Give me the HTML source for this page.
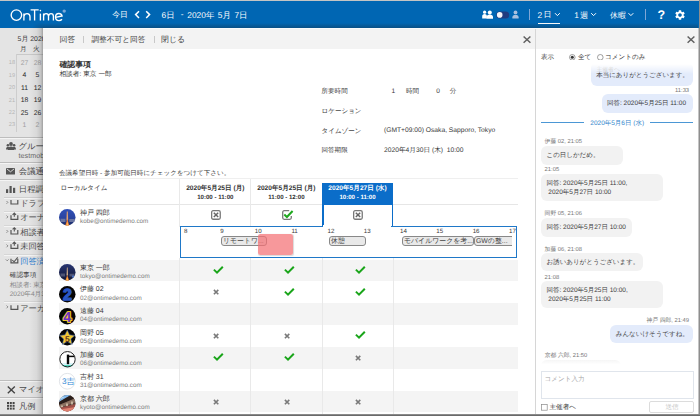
<!DOCTYPE html>
<html><head><meta charset="utf-8"><style>
*{box-sizing:border-box;margin:0;padding:0}
html,body{width:700px;height:416px;overflow:hidden;background:#e8e8e8;font-family:"Liberation Sans",sans-serif;color:#333;text-rendering:geometricPrecision}
.a{position:absolute;white-space:nowrap}
svg.a{overflow:visible}
.pl{height:9.6px;border:1px solid #888;border-radius:3px;background:#e9e9e9;font-size:6.9px;line-height:7.6px;color:#404040;padding-left:1.2px;overflow:hidden}
</style></head><body>
<div class="a" style="left:0px;top:0px;width:700px;height:1px;background:#c4c4c4;"></div>
<div class="a" style="left:0px;top:1px;width:700px;height:27px;background:#0066b3;"></div>
<svg class="a" style="left:8px;top:5px" width="62" height="18"><g fill="none" stroke="#fff" stroke-width="1.35">
  <circle cx="8.4" cy="10.1" r="5.25"/>
  <path d="M15.9 15.5V8.6M15.9 11.4c0.4-1.9 1.7-2.8 3.2-2.8c1.9 0 2.9 1.2 2.9 3.2v3.7"/>
  <path d="M22.6 4.9h8.1M26.6 4.9v10.6"/>
  <path d="M32.4 8.6v6.9"/>
  <path d="M35.6 15.5V8.6M35.6 11c0.3-1.6 1.3-2.4 2.5-2.4c1.5 0 2.4 1 2.4 2.7v4.2M40.5 11.1c0.3-1.6 1.3-2.5 2.5-2.5c1.5 0 2.4 1 2.4 2.7v4.2"/>
  <path d="M47.6 12.4l6.5-1.5c-0.5-1.5-1.7-2.4-3.2-2.4c-2 0-3.4 1.6-3.4 3.6c0 2 1.5 3.5 3.5 3.5c1.3 0 2.3-0.5 3-1.3"/>
 </g>
 <circle cx="32.4" cy="5.6" r="0.8" fill="#fff"/>
 <circle cx="56.2" cy="6.1" r="1.7" fill="#7aa8d8"/></svg>
<div class="a " style="left:112.30px;top:5px;font-size:7.8px;line-height:20px;color:#fff;font-weight:normal;">今日</div>
<svg class="a" style="left:134px;top:10px" width="18" height="10"><path d="M5 1.2L1.6 4.6L5 8M12.2 1.2L15.6 4.6L12.2 8" fill="none" stroke="#fff" stroke-width="1.5"/></svg>
<div class="a " style="left:161.60px;top:5px;font-size:8.4px;line-height:20px;color:#fff;font-weight:normal;">6日</div>
<div class="a " style="left:180.80px;top:4px;font-size:8.4px;line-height:20px;color:#fff;font-weight:normal;">-</div>
<div class="a " style="left:187.30px;top:5px;font-size:8.4px;line-height:20px;color:#fff;font-weight:normal;">2020年</div>
<div class="a " style="left:217.80px;top:5px;font-size:8.4px;line-height:20px;color:#fff;font-weight:normal;">5月</div>
<div class="a " style="left:234.40px;top:5px;font-size:8.4px;line-height:20px;color:#fff;font-weight:normal;">7日</div>
<svg class="a" style="left:481px;top:9px" width="40" height="12"><g fill="#fff"><circle cx="3.6" cy="3.2" r="1.6"/><path d="M1.2 9.6V7c0-1 .8-2 2.4-2S5.9 6 5.9 7v2.6z"/><circle cx="8.8" cy="3.4" r="2"/><path d="M5.6 9.8V8c0-1.5 1.3-2.5 3.2-2.5S12 6.5 12 8v1.8z"/></g>
 <rect x="15.2" y="2.4" width="13" height="7" rx="3.5" fill="#203c80"/>
 <circle cx="18.7" cy="5.9" r="2.8" fill="#f4f4f8"/>
 <g fill="#a9c0de"><circle cx="34.5" cy="3.4" r="1.9"/><path d="M31.4 9.6V8.2c0-1.5 1.2-2.5 3.1-2.5s3.1 1 3.1 2.5v1.4z"/></g></svg>
<div class="a" style="left:529px;top:9px;width:1px;height:11px;background:#7fa6d6;"></div>
<div class="a " style="left:537.60px;top:5px;font-size:8.4px;line-height:20px;color:#fff;font-weight:normal;">2</div>
<div class="a " style="left:543.60px;top:5px;font-size:8.0px;line-height:20px;color:#fff;font-weight:normal;">日</div>
<div class="a" style="left:538px;top:22.5px;width:22px;height:1.6px;background:#fff;"></div>
<div class="a " style="left:574.30px;top:5px;font-size:8.4px;line-height:20px;color:#fff;font-weight:normal;">1</div>
<div class="a " style="left:580.00px;top:6px;font-size:8.2px;line-height:20px;color:#fff;font-weight:normal;">週</div>
<div class="a " style="left:610.00px;top:6px;font-size:7.9px;line-height:20px;color:#fff;font-weight:normal;">休暇</div>
<svg class="a" style="left:554px;top:12px" width="80" height="6"><path d="M1 1.2l2.4 2.4l2.4-2.4M37.2 1.2l2.4 2.4l2.4-2.4M74.5 1.2l2.4 2.4l2.4-2.4" fill="none" stroke="#fff" stroke-width="1"/></svg>
<div class="a" style="left:644.5px;top:9px;width:1px;height:11px;background:#7fa6d6;"></div>
<div class="a " style="left:657.60px;top:5px;font-size:12.5px;line-height:20px;color:#fff;font-weight:bold;">?</div>
<svg class="a" style="left:674px;top:8.5px" width="12" height="12" viewBox="0 0 24 24"><path fill="#fff" d="M19.14 12.94c.04-.3.06-.61.06-.94 0-.32-.02-.64-.07-.94l2.03-1.58a.49.49 0 0 0 .12-.61l-1.92-3.32a.49.49 0 0 0-.59-.22l-2.39.96c-.5-.38-1.03-.7-1.62-.94l-.36-2.54a.48.48 0 0 0-.48-.41h-3.84c-.24 0-.43.17-.47.41l-.36 2.54c-.59.24-1.130.57-1.62.94l-2.39-.96a.48.48 0 0 0-.59.22L2.74 8.87c-.12.21-.08.47.12.61l2.03 1.58c-.05.3-.09.63-.09.94s.02.64.07.94l-2.03 1.58a.49.49 0 0 0-.12.61l1.92 3.32c.12.22.37.29.59.22l2.39-.96c.5.38 1.03.7 1.62.94l.36 2.540c.05.24.24.41.48.41h3.84c.24 0 .44-.17.47-.41l.36-2.54c.59-.24 1.13-.56 1.62-.94l2.39.96c.22.08.47 0 .59-.22l1.92-3.32c.12-.22.07-.47-.12-.61l-2.01-1.58zM12 15.6c-1.98 0-3.6-1.62-3.6-3.6s1.62-3.6 3.6-3.6 3.6 1.620 3.6 3.6-1.62 3.6-3.6 3.6z"/></svg>
<div class="a" style="left:0px;top:28px;width:43px;height:386px;background:#e4e4e4;"></div>
<div class="a " style="left:17.60px;top:30px;font-size:6.9px;line-height:20px;color:#383838;font-weight:normal;">5月 2020</div>
<div class="a " style="left:20.00px;top:40px;font-size:6.6px;line-height:20px;color:#383838;font-weight:normal;">月</div>
<div class="a " style="left:33.00px;top:40px;font-size:6.6px;line-height:20px;color:#383838;font-weight:normal;">火</div>
<div class="a" style="left:17px;top:54px;width:26px;height:1px;background:#c9c9c9;"></div>
<div class="a" style="left:16px;top:54px;width:1px;height:78px;background:#cdcdcd;"></div>
<div class="a " style="left:8.80px;top:53px;font-size:5.6px;line-height:20px;color:#b5b5b5;font-weight:normal;">18</div>
<div class="a " style="left:8.80px;top:66px;font-size:5.6px;line-height:20px;color:#b5b5b5;font-weight:normal;">19</div>
<div class="a " style="left:8.80px;top:78px;font-size:5.6px;line-height:20px;color:#b5b5b5;font-weight:normal;">20</div>
<div class="a " style="left:8.80px;top:91px;font-size:5.6px;line-height:20px;color:#b5b5b5;font-weight:normal;">21</div>
<div class="a " style="left:8.80px;top:103px;font-size:5.6px;line-height:20px;color:#b5b5b5;font-weight:normal;">22</div>
<div class="a " style="left:8.80px;top:115px;font-size:5.6px;line-height:20px;color:#b5b5b5;font-weight:normal;">23</div>
<div class="a " style="left:18.00px;top:54px;font-size:6.8px;line-height:20px;color:#a0a0a0;font-weight:normal;width:13px;text-align:center">27</div>
<div class="a " style="left:31.00px;top:54px;font-size:6.8px;line-height:20px;color:#a0a0a0;font-weight:normal;width:13px;text-align:center">28</div>
<div class="a " style="left:18.00px;top:66px;font-size:6.8px;line-height:20px;color:#2a2a2a;font-weight:normal;width:13px;text-align:center">4</div>
<div class="a " style="left:31.00px;top:66px;font-size:6.8px;line-height:20px;color:#2a2a2a;font-weight:normal;width:13px;text-align:center">5</div>
<div class="a " style="left:18.00px;top:79px;font-size:6.8px;line-height:20px;color:#2a2a2a;font-weight:normal;width:13px;text-align:center">11</div>
<div class="a " style="left:31.00px;top:79px;font-size:6.8px;line-height:20px;color:#2a2a2a;font-weight:normal;width:13px;text-align:center">12</div>
<div class="a " style="left:18.00px;top:91px;font-size:6.8px;line-height:20px;color:#2a2a2a;font-weight:normal;width:13px;text-align:center">18</div>
<div class="a " style="left:31.00px;top:91px;font-size:6.8px;line-height:20px;color:#2a2a2a;font-weight:normal;width:13px;text-align:center">19</div>
<div class="a " style="left:18.00px;top:104px;font-size:6.8px;line-height:20px;color:#2a2a2a;font-weight:normal;width:13px;text-align:center">25</div>
<div class="a " style="left:31.00px;top:104px;font-size:6.8px;line-height:20px;color:#2a2a2a;font-weight:normal;width:13px;text-align:center">26</div>
<div class="a " style="left:18.00px;top:116px;font-size:6.8px;line-height:20px;color:#a0a0a0;font-weight:normal;width:13px;text-align:center">1</div>
<div class="a " style="left:31.00px;top:116px;font-size:6.8px;line-height:20px;color:#a0a0a0;font-weight:normal;width:13px;text-align:center">2</div>
<div class="a" style="left:0px;top:137px;width:43px;height:1px;background:#bdbdbd;"></div>
<div class="a" style="left:0px;top:138px;width:43px;height:1px;background:#f4f4f4;"></div>
<svg class="a" style="left:6px;top:142.2px" width="10" height="8"><g fill="#555"><circle cx="5" cy="2" r="1.9"/><path d="M1.8 8c0-2.2 1.3-3.6 3.2-3.6S8.2 5.8 8.2 8z"/><circle cx="1.9" cy="3.3" r="1.3"/><circle cx="8.1" cy="3.3" r="1.3"/><path d="M0 7.6c0-1.6.7-2.9 1.9-2.9s1.6 1 1.6 1L2.5 7.6zM10 7.6c0-1.6-.7-2.9-1.9-2.9s-1.6 1-1.6 1l1 1.9z"/></g></svg>
<div class="a " style="left:18.40px;top:136px;font-size:8.4px;line-height:20px;color:#4a4a4a;font-weight:normal;">グループ</div>
<div class="a " style="left:18.60px;top:146px;font-size:7.2px;line-height:20px;color:#6a6a6a;font-weight:normal;">testmobile</div>
<div class="a" style="left:0px;top:162px;width:43px;height:1px;background:#bdbdbd;"></div>
<div class="a" style="left:0px;top:163px;width:43px;height:1px;background:#f4f4f4;"></div>
<svg class="a" style="left:6px;top:167.5px" width="9" height="6.5"><rect x="0" y="0" width="9" height="6.5" rx="0.6" fill="#555"/><path d="M0.9 0.9l3.6 2.9l3.6-2.9" fill="none" stroke="#e9e9e9" stroke-width="0.9"/></svg>
<div class="a " style="left:18.80px;top:161px;font-size:8.4px;line-height:20px;color:#4a4a4a;font-weight:normal;">会議通知</div>
<div class="a" style="left:0px;top:179px;width:43px;height:1px;background:#bdbdbd;"></div>
<div class="a" style="left:0px;top:180px;width:43px;height:1px;background:#f4f4f4;"></div>
<svg class="a" style="left:6px;top:185.5px" width="9.5" height="7"><g fill="#555"><rect x="0" y="3.2" width="2.2" height="3.8"/><rect x="3.5" y="0" width="2.2" height="7"/><rect x="7" y="1.8" width="2.2" height="5.2"/></g></svg>
<div class="a " style="left:18.80px;top:179px;font-size:8.4px;line-height:20px;color:#4a4a4a;font-weight:normal;">日程調整</div>
<div class="a" style="left:4px;top:197px;width:39px;height:1px;background:#cfcfcf;"></div>
<div class="a" style="left:4px;top:198px;width:39px;height:1px;background:#f4f4f4;"></div>
<svg class="a" style="left:0px;top:198px" width="20" height="12"><path d="M6.5 3l1.4 1.4l-1.4 1.4" fill="none" stroke="#666" stroke-width="0.7"/><path d="M11 2v4h6.8v-4" fill="none" stroke="#555" stroke-width="1.2"/></svg>
<div class="a " style="left:20.20px;top:194px;font-size:8.2px;line-height:20px;color:#4a4a4a;font-weight:normal;">ドラフト</div>
<div class="a" style="left:4px;top:211px;width:39px;height:1px;background:#d6d6d6;"></div>
<div class="a" style="left:4px;top:212px;width:39px;height:1px;background:#f4f4f4;"></div>
<svg class="a" style="left:0px;top:212px" width="20" height="12"><path d="M6.5 3.5l1.4 1.4l-1.4 1.4" fill="none" stroke="#666" stroke-width="0.7"/><path d="M11 3.3v4h6.8v-4" fill="none" stroke="#555" stroke-width="1.2"/><path d="M14.3 4.8V1.2M12.6 2.8L14.3 1.0999999999999999l1.7 1.7" fill="none" stroke="#555" stroke-width="1.1"/></svg>
<div class="a " style="left:20.20px;top:208px;font-size:8.2px;line-height:20px;color:#4a4a4a;font-weight:normal;">オーナー</div>
<div class="a" style="left:4px;top:225px;width:39px;height:1px;background:#d6d6d6;"></div>
<div class="a" style="left:4px;top:226px;width:39px;height:1px;background:#f4f4f4;"></div>
<svg class="a" style="left:0px;top:226px" width="20" height="12"><path d="M6.5 4l1.4 1.4l-1.4 1.4" fill="none" stroke="#666" stroke-width="0.7"/><path d="M11 4v4h6.8v-4" fill="none" stroke="#555" stroke-width="1.2"/><path d="M14.3 5.4V1.8M12.6 3.4000000000000004L14.3 1.7l1.7 1.7" fill="none" stroke="#555" stroke-width="1.1"/></svg>
<div class="a " style="left:20.20px;top:223px;font-size:8.2px;line-height:20px;color:#4a4a4a;font-weight:normal;">相談者</div>
<div class="a" style="left:4px;top:240px;width:39px;height:1px;background:#d6d6d6;"></div>
<div class="a" style="left:4px;top:241px;width:39px;height:1px;background:#f4f4f4;"></div>
<svg class="a" style="left:0px;top:241px" width="20" height="12"><path d="M6.5 3.5l1.4 1.4l-1.4 1.4" fill="none" stroke="#666" stroke-width="0.7"/><path d="M11 3.3v4h6.8v-4" fill="none" stroke="#555" stroke-width="1.2"/><path d="M14.3 4.8V1.2M12.6 2.8L14.3 1.0999999999999999l1.7 1.7" fill="none" stroke="#555" stroke-width="1.1"/></svg>
<div class="a " style="left:20.20px;top:237px;font-size:8.2px;line-height:20px;color:#4a4a4a;font-weight:normal;">未回答</div>
<div class="a" style="left:4px;top:254px;width:39px;height:1px;background:#d6d6d6;"></div>
<div class="a" style="left:4px;top:255px;width:39px;height:1px;background:#f4f4f4;"></div>
<svg class="a" style="left:0px;top:255px" width="20" height="12"><path d="M5.8 4.4l1.4 1.4l1.4-1.4" fill="none" stroke="#666" stroke-width="0.7"/><path d="M11 3.8v4h6.8v-4" fill="none" stroke="#555" stroke-width="1.2"/><path d="M12.3 5.2l1.8 1.6l3.6-4.4" fill="none" stroke="#555" stroke-width="1.1"/></svg>
<div class="a " style="left:20.20px;top:252px;font-size:8.2px;line-height:20px;color:#2f7fd0;font-weight:normal;">回答済</div>
<div class="a " style="left:9.70px;top:266px;font-size:6.7px;line-height:20px;color:#3a3a3a;font-weight:normal;">確認事項</div>
<div class="a " style="left:9.70px;top:276px;font-size:6.6px;line-height:20px;color:#888;font-weight:normal;">相談者: 東京 一郎</div>
<div class="a " style="left:9.70px;top:285px;font-size:6.6px;line-height:20px;color:#888;font-weight:normal;">2020年4月30日</div>
<div class="a" style="left:4px;top:301px;width:39px;height:1px;background:#d6d6d6;"></div>
<div class="a" style="left:4px;top:302px;width:39px;height:1px;background:#f4f4f4;"></div>
<svg class="a" style="left:0px;top:302px" width="20" height="12"><path d="M6.5 3.5l1.4 1.4l-1.4 1.4" fill="none" stroke="#666" stroke-width="0.7"/><path d="M11 3.3v4h6.8v-4" fill="none" stroke="#555" stroke-width="1.2"/></svg>
<div class="a " style="left:20.20px;top:299px;font-size:8.2px;line-height:20px;color:#4a4a4a;font-weight:normal;">アーカイブ</div>
<div class="a" style="left:0px;top:380px;width:43px;height:1px;background:#bdbdbd;"></div>
<div class="a" style="left:0px;top:381px;width:43px;height:1px;background:#f4f4f4;"></div>
<svg class="a" style="left:6.5px;top:385.5px" width="9" height="8"><path d="M0.8 0.6l7 6.6M7.8 0.6l-7 6.6" stroke="#444" stroke-width="1.4"/></svg>
<div class="a " style="left:19.00px;top:380px;font-size:8.2px;line-height:20px;color:#4a4a4a;font-weight:normal;">マイオプション</div>
<div class="a" style="left:0px;top:397px;width:43px;height:1px;background:#bdbdbd;"></div>
<div class="a" style="left:0px;top:398px;width:43px;height:1px;background:#f4f4f4;"></div>
<svg class="a" style="left:7px;top:402px" width="8" height="8"><g fill="#444"><rect x="0.0" y="0.0" width="2" height="2"/><rect x="2.8" y="0.0" width="2" height="2"/><rect x="5.6" y="0.0" width="2" height="2"/><rect x="0.0" y="2.8" width="2" height="2"/><rect x="2.8" y="2.8" width="2" height="2"/><rect x="5.6" y="2.8" width="2" height="2"/><rect x="0.0" y="5.6" width="2" height="2"/><rect x="2.8" y="5.6" width="2" height="2"/><rect x="5.6" y="5.6" width="2" height="2"/></g></svg>
<div class="a " style="left:19.00px;top:397px;font-size:8.2px;line-height:20px;color:#4a4a4a;font-weight:normal;">凡例</div>
<div class="a" style="left:29px;top:28px;width:14px;height:386px;background:linear-gradient(to right,rgba(0,0,0,0),rgba(0,0,0,0.05) 55%,rgba(0,0,0,0.14) 85%,rgba(0,0,0,0.3))"></div>
<div class="a" style="left:43px;top:22.5px;width:655px;height:5.5px;background:linear-gradient(rgba(40,40,40,0),rgba(40,40,40,0.14) 40%,rgba(30,30,30,0.3))"></div>
<div class="a" style="left:33px;top:22.5px;width:10px;height:5.5px;background:radial-gradient(at 100% 100%,rgba(40,40,40,0.28),rgba(40,40,40,0) 80%)"></div>
<div class="a" style="left:43px;top:28px;width:492px;height:386px;background:#fff;"></div>
<div class="a" style="left:43px;top:28px;width:492px;height:21px;background:#f3f3f3;"></div>
<div class="a " style="left:59.40px;top:30px;font-size:7.9px;line-height:20px;color:#444;font-weight:normal;">回答</div>
<div class="a" style="left:83px;top:35.5px;width:1px;height:7px;background:#c8c8c8;"></div>
<div class="a " style="left:91.40px;top:30px;font-size:7.7px;line-height:20px;color:#444;font-weight:normal;">調整不可と回答</div>
<div class="a" style="left:153.5px;top:35.5px;width:1px;height:7px;background:#c8c8c8;"></div>
<div class="a " style="left:161.00px;top:30px;font-size:7.9px;line-height:20px;color:#444;font-weight:normal;">閉じる</div>
<svg class="a" style="left:523px;top:35.8px" width="8" height="7.2"><path d="M0.6 0.5l6.8 6.2M7.4 0.5l-6.8 6.2" stroke="#606060" stroke-width="1.5"/></svg>
<div class="a" style="left:534.8px;top:28px;width:1.6px;height:386px;background:#d6d6d6;"></div>
<div class="a " style="left:59.40px;top:55px;font-size:7.9px;line-height:20px;color:#333;font-weight:bold;">確認事項</div>
<div class="a " style="left:59.40px;top:65px;font-size:6.7px;line-height:20px;color:#383838;font-weight:normal;">相談者: 東京 一郎</div>
<div class="a " style="left:321.50px;top:82px;font-size:6.55px;line-height:20px;color:#383838;font-weight:normal;">所要時間</div>
<div class="a " style="left:391.50px;top:82px;font-size:6.6px;line-height:20px;color:#383838;font-weight:normal;">1</div>
<div class="a " style="left:406.00px;top:82px;font-size:6.55px;line-height:20px;color:#383838;font-weight:normal;">時間</div>
<div class="a " style="left:436.30px;top:82px;font-size:6.6px;line-height:20px;color:#383838;font-weight:normal;">0</div>
<div class="a " style="left:449.70px;top:82px;font-size:6.55px;line-height:20px;color:#383838;font-weight:normal;">分</div>
<div class="a " style="left:321.50px;top:102px;font-size:6.55px;line-height:20px;color:#383838;font-weight:normal;">ロケーション</div>
<div class="a " style="left:321.50px;top:122px;font-size:6.55px;line-height:20px;color:#383838;font-weight:normal;">タイムゾーン</div>
<div class="a " style="left:384.00px;top:121px;font-size:6.7px;line-height:20px;color:#383838;font-weight:normal;">(GMT+09:00) Osaka, Sapporo, Tokyo</div>
<div class="a " style="left:321.50px;top:141px;font-size:6.55px;line-height:20px;color:#383838;font-weight:normal;">回答期限</div>
<div class="a " style="left:384.00px;top:141px;font-size:6.7px;line-height:20px;color:#383838;font-weight:normal;">2020年4月30日 (木) &nbsp;10:00</div>
<div class="a " style="left:59.00px;top:164px;font-size:6.55px;line-height:20px;color:#383838;font-weight:normal;">会議希望日時 - 参加可能日時にチェックをつけて下さい。</div>
<div class="a" style="left:59px;top:177.5px;width:459px;height:1px;background:#efefef;"></div>
<div class="a " style="left:60.50px;top:179px;font-size:6.6px;line-height:20px;color:#383838;font-weight:normal;">ローカルタイム</div>
<div class="a" style="left:59px;top:204.3px;width:459px;height:1px;background:#e6e6e6;"></div>
<div class="a" style="left:179.3px;top:178.5px;width:1px;height:48px;background:#e9e9e9;"></div>
<div class="a" style="left:250.4px;top:178.5px;width:1px;height:48px;background:#e9e9e9;"></div>
<div class="a" style="left:322px;top:183px;width:71px;height:21.6px;background:#0b6dc9;"></div>
<div class="a" style="left:322px;top:204.6px;width:1.5px;height:22px;background:#0b6dc9;"></div>
<div class="a" style="left:391.5px;top:204.6px;width:1.5px;height:22px;background:#0b6dc9;"></div>
<div class="a " style="left:179.80px;top:179px;font-size:6.6px;line-height:20px;color:#333;font-weight:bold;width:71px;text-align:center">2020年5月25日 (月)</div>
<div class="a " style="left:179.80px;top:188px;font-size:6.1px;line-height:20px;color:#333;font-weight:bold;width:71px;text-align:center">10:00 - 11:00</div>
<div class="a " style="left:250.90px;top:179px;font-size:6.6px;line-height:20px;color:#333;font-weight:bold;width:71px;text-align:center">2020年5月25日 (月)</div>
<div class="a " style="left:250.90px;top:188px;font-size:6.1px;line-height:20px;color:#333;font-weight:bold;width:71px;text-align:center">11:00 - 12:00</div>
<div class="a " style="left:322.00px;top:179px;font-size:6.6px;line-height:20px;color:#fff;font-weight:bold;width:71px;text-align:center">2020年5月27日 (水)</div>
<div class="a " style="left:322.00px;top:188px;font-size:6.1px;line-height:20px;color:#fff;font-weight:bold;width:71px;text-align:center">10:00 - 11:00</div>
<svg class="a" style="left:59.4px;top:208.9px" width="16.5" height="16.5"><defs><linearGradient id="G1" x1="0" y1="0" x2="0" y2="1"><stop offset="0" stop-color="#3050b8"/><stop offset="0.55" stop-color="#2a44a0"/><stop offset="1" stop-color="#1a2a60"/></linearGradient></defs><circle cx="8.25" cy="8.25" r="8.25" fill="url(#G1)"/><path d="M1.5 9.8h5v3.2h-5zM10.3 10h5.5v3h-5.5z" fill="#8088a8" opacity="0.75"/><path d="M7.8 2.5h1l.4 9h-1.8z" fill="#e0a070"/><path d="M8.3 10l2 6.5h-4z" fill="#f07a30"/><path d="M8.3 12.5l1 4h-2z" fill="#ffc060"/></svg>
<div class="a " style="left:79.90px;top:204px;font-size:7.0px;line-height:20px;color:#383838;font-weight:normal;">神戸 四郎</div>
<div class="a " style="left:80.00px;top:212px;font-size:6.3px;line-height:20px;color:#7c7c7c;font-weight:normal;">kobe@ontimedemo.com</div>
<svg class="a" style="left:211px;top:210.3px" width="10" height="10"><rect x="0.65" y="0.65" width="8.6" height="8.6" rx="1.5" fill="#fff" stroke="#787878" stroke-width="1.3"/><path d="M2.8 2.8l4.4 4.2M7.2 2.8l-4.4 4.2" stroke="#666" stroke-width="1.5"/></svg>
<svg class="a" style="left:282px;top:210.3px" width="12" height="10"><path d="M7.2 0.7H2.2a1.5 1.5 0 0 0-1.5 1.5v5.6a1.5 1.5 0 0 0 1.5 1.5h5.6a1.5 1.5 0 0 0 1.5-1.5V6" fill="none" stroke="#787878" stroke-width="1.3"/><path d="M2.3 4.6l2.6 2.4l5.7-6" fill="none" stroke="#1fa81f" stroke-width="2"/></svg>
<svg class="a" style="left:353.2px;top:210.3px" width="10" height="10"><rect x="0.65" y="0.65" width="8.6" height="8.6" rx="1.5" fill="#fff" stroke="#787878" stroke-width="1.3"/><path d="M2.8 2.8l4.4 4.2M7.2 2.8l-4.4 4.2" stroke="#666" stroke-width="1.5"/></svg>
<div class="a" style="left:179.8px;top:226px;width:337.6px;height:31.6px;border:1.4px solid #1f78c8"></div>
<div class="a" style="left:323.4px;top:224.5px;width:68.1px;height:3px;background:#fff;"></div>
<div class="a " style="left:175.70px;top:222px;font-size:6.2px;line-height:20px;color:#383838;font-weight:normal;width:20px;text-align:center">8</div>
<div class="a " style="left:212.00px;top:222px;font-size:6.2px;line-height:20px;color:#383838;font-weight:normal;width:20px;text-align:center">9</div>
<div class="a " style="left:248.30px;top:222px;font-size:6.2px;line-height:20px;color:#383838;font-weight:normal;width:20px;text-align:center">10</div>
<div class="a " style="left:284.60px;top:222px;font-size:6.2px;line-height:20px;color:#383838;font-weight:normal;width:20px;text-align:center">11</div>
<div class="a " style="left:320.90px;top:222px;font-size:6.2px;line-height:20px;color:#383838;font-weight:normal;width:20px;text-align:center">12</div>
<div class="a " style="left:357.20px;top:222px;font-size:6.2px;line-height:20px;color:#383838;font-weight:normal;width:20px;text-align:center">13</div>
<div class="a " style="left:393.50px;top:222px;font-size:6.2px;line-height:20px;color:#383838;font-weight:normal;width:20px;text-align:center">14</div>
<div class="a " style="left:429.80px;top:222px;font-size:6.2px;line-height:20px;color:#383838;font-weight:normal;width:20px;text-align:center">15</div>
<div class="a " style="left:466.10px;top:222px;font-size:6.2px;line-height:20px;color:#383838;font-weight:normal;width:20px;text-align:center">16</div>
<div class="a " style="left:502.40px;top:222px;font-size:6.2px;line-height:20px;color:#383838;font-weight:normal;width:20px;text-align:center">17</div>
<div class="a pl" style="left:221.3px;top:236px;width:45.3px"></div>
<div class="a " style="left:222.90px;top:232px;font-size:6.9px;line-height:20px;color:#404040;font-weight:normal;">リモートワ...</div>
<div class="a" style="left:258.1px;top:234.1px;width:35.2px;height:21px;background:rgba(244,112,116,0.72);border-radius:2.5px;box-shadow:0.5px 0.5px 1px rgba(0,0,0,0.15)"></div>
<div class="a pl" style="left:329.4px;top:236px;width:37.1px"></div>
<div class="a " style="left:331.00px;top:232px;font-size:6.9px;line-height:20px;color:#404040;font-weight:normal;">休憩</div>
<div class="a pl" style="left:402.4px;top:236px;width:71.3px"></div>
<div class="a " style="left:404.00px;top:232px;font-size:6.9px;line-height:20px;color:#404040;font-weight:normal;">モバイルワークを考...</div>
<div class="a" style="left:474.4px;top:236px;width:37.8px;height:9.6px;overflow:hidden"><div class="a pl" style="left:0;top:0;width:42.8px"></div></div>
<div class="a " style="left:476.00px;top:232px;font-size:6.9px;line-height:20px;color:#404040;font-weight:normal;">GWの整...</div>
<div class="a" style="left:59px;top:259.5px;width:459px;height:21.85px;background:#f4f4f4;"></div>
<div class="a" style="left:59px;top:303.2px;width:459px;height:21.85px;background:#f4f4f4;"></div>
<div class="a" style="left:59px;top:346.9px;width:459px;height:21.85px;background:#f4f4f4;"></div>
<div class="a" style="left:59px;top:390.6px;width:459px;height:21.85px;background:#f4f4f4;"></div>
<div class="a" style="left:179.3px;top:258px;width:1px;height:156px;background:#e9e9e9;"></div>
<div class="a" style="left:250.4px;top:258px;width:1px;height:156px;background:#e9e9e9;"></div>
<div class="a" style="left:321.5px;top:258px;width:1px;height:156px;background:#e9e9e9;"></div>
<div class="a" style="left:392.5px;top:258px;width:1px;height:156px;background:#e9e9e9;"></div>
<svg class="a" style="left:59.4px;top:263.9px" width="16.5" height="16.5"><defs><linearGradient id="G2" x1="0" y1="0" x2="0" y2="1"><stop offset="0" stop-color="#283470"/><stop offset="0.5" stop-color="#1c2552"/><stop offset="1" stop-color="#141a38"/></linearGradient></defs><circle cx="8.25" cy="8.25" r="8.25" fill="url(#G2)"/><path d="M1.5 9.5h4.5v3h-4.5zM10.5 9.8h5v2.8h-5z" fill="#5a6080" opacity="0.8"/><path d="M13 11.5h2v2h-2z" fill="#4a70c0"/><path d="M7.9 3.5h0.8l.4 8h-1.6z" fill="#c8a888"/><path d="M8.25 11l1.9 5.5h-3.8z" fill="#e87a30"/><path d="M8.25 13l1 3.5h-2z" fill="#ffc050"/></svg>
<div class="a " style="left:79.90px;top:259px;font-size:7.0px;line-height:20px;color:#383838;font-weight:normal;">東京 一郎</div>
<div class="a " style="left:80.00px;top:267px;font-size:6.3px;line-height:20px;color:#7c7c7c;font-weight:normal;">tokyo@ontimedemo.com</div>
<svg class="a" style="left:212.5px;top:265.9px" width="11" height="8"><path d="M0.9 3.6l3.1 3l5.8-5.9" fill="none" stroke="#1aa51a" stroke-width="2"/></svg>
<svg class="a" style="left:283.5px;top:265.9px" width="11" height="8"><path d="M0.9 3.6l3.1 3l5.8-5.9" fill="none" stroke="#1aa51a" stroke-width="2"/></svg>
<svg class="a" style="left:354.5px;top:265.9px" width="11" height="8"><path d="M0.9 3.6l3.1 3l5.8-5.9" fill="none" stroke="#1aa51a" stroke-width="2"/></svg>
<svg class="a" style="left:59.4px;top:285.75px" width="16.5" height="16.5"><circle cx="8.25" cy="8.25" r="8.25" fill="#050505"/><text x="8.5" y="14.4" font-size="16" font-weight="bold" text-anchor="middle" fill="#2a56c4" stroke="#2a56c4" stroke-width="1.3" stroke-linejoin="round" font-family="Liberation Sans">2</text></svg>
<div class="a " style="left:79.90px;top:280px;font-size:7.0px;line-height:20px;color:#383838;font-weight:normal;">伊藤 02</div>
<div class="a " style="left:80.00px;top:289px;font-size:6.3px;line-height:20px;color:#7c7c7c;font-weight:normal;">02@ontimedemo.com</div>
<svg class="a" style="left:212.7px;top:289.25px" width="7" height="7"><path d="M0.9 0.9l4.4 4.4M5.3 0.9l-4.4 4.4" stroke="#7a7a7a" stroke-width="1.6"/></svg>
<svg class="a" style="left:283.5px;top:287.75px" width="11" height="8"><path d="M0.9 3.6l3.1 3l5.8-5.9" fill="none" stroke="#1aa51a" stroke-width="2"/></svg>
<svg class="a" style="left:354.5px;top:287.75px" width="11" height="8"><path d="M0.9 3.6l3.1 3l5.8-5.9" fill="none" stroke="#1aa51a" stroke-width="2"/></svg>
<svg class="a" style="left:59.4px;top:307.59999999999997px" width="16.5" height="16.5"><circle cx="8.25" cy="8.25" r="8.25" fill="#050505"/><text x="8.4" y="13.9" font-size="14.5" font-weight="bold" text-anchor="middle" fill="#6a30c8" stroke="#f0c428" stroke-width="2.2" stroke-linejoin="round" paint-order="stroke" font-family="Liberation Sans">4</text></svg>
<div class="a " style="left:79.90px;top:302px;font-size:7.0px;line-height:20px;color:#383838;font-weight:normal;">遠藤 04</div>
<div class="a " style="left:80.00px;top:310px;font-size:6.3px;line-height:20px;color:#7c7c7c;font-weight:normal;">04@ontimedemo.com</div>
<svg class="a" style="left:59.4px;top:329.45px" width="16.5" height="16.5"><circle cx="8.25" cy="8.25" r="8.25" fill="#050505"/><path d="M8.25 0.9l2.3 4.9l5.4 .6l-4 3.6l1.2 5.4l-4.9-2.8l-4.9 2.8l1.2-5.4l-4-3.6l5.4-.6z" fill="#f2c832" stroke="#2850a8" stroke-width="0.6"/><text x="8.4" y="12.6" font-size="8.5" font-weight="bold" text-anchor="middle" fill="#5a3020" font-family="Liberation Sans">5</text></svg>
<div class="a " style="left:79.90px;top:324px;font-size:7.0px;line-height:20px;color:#383838;font-weight:normal;">岡野 05</div>
<div class="a " style="left:80.00px;top:332px;font-size:6.3px;line-height:20px;color:#7c7c7c;font-weight:normal;">05@ontimedemo.com</div>
<svg class="a" style="left:212.7px;top:332.95px" width="7" height="7"><path d="M0.9 0.9l4.4 4.4M5.3 0.9l-4.4 4.4" stroke="#7a7a7a" stroke-width="1.6"/></svg>
<svg class="a" style="left:283.7px;top:332.95px" width="7" height="7"><path d="M0.9 0.9l4.4 4.4M5.3 0.9l-4.4 4.4" stroke="#7a7a7a" stroke-width="1.6"/></svg>
<svg class="a" style="left:354.5px;top:331.45px" width="11" height="8"><path d="M0.9 3.6l3.1 3l5.8-5.9" fill="none" stroke="#1aa51a" stroke-width="2"/></svg>
<svg class="a" style="left:59.4px;top:351.29999999999995px" width="16.5" height="16.5"><defs><clipPath id="C6"><circle cx="8.5" cy="8.25" r="8"/></clipPath></defs><circle cx="8.5" cy="8.25" r="8" fill="#fff"/><g clip-path="url(#C6)"><rect x="0" y="12" width="17" height="2.5" fill="#d8f4f8"/><rect x="0" y="14" width="17" height="3" fill="#50d8c0"/></g><circle cx="8.5" cy="8.25" r="7.7" fill="none" stroke="#222" stroke-width="1"/><path d="M9 3.6v9.6" stroke="#050505" stroke-width="2.4"/><path d="M9 5.4h6.4" stroke="#050505" stroke-width="1.5"/></svg>
<div class="a " style="left:79.90px;top:346px;font-size:7.0px;line-height:20px;color:#383838;font-weight:normal;">加藤 06</div>
<div class="a " style="left:80.00px;top:354px;font-size:6.3px;line-height:20px;color:#7c7c7c;font-weight:normal;">06@ontimedemo.com</div>
<svg class="a" style="left:212.5px;top:353.29999999999995px" width="11" height="8"><path d="M0.9 3.6l3.1 3l5.8-5.9" fill="none" stroke="#1aa51a" stroke-width="2"/></svg>
<svg class="a" style="left:283.5px;top:353.29999999999995px" width="11" height="8"><path d="M0.9 3.6l3.1 3l5.8-5.9" fill="none" stroke="#1aa51a" stroke-width="2"/></svg>
<svg class="a" style="left:354.7px;top:354.79999999999995px" width="7" height="7"><path d="M0.9 0.9l4.4 4.4M5.3 0.9l-4.4 4.4" stroke="#7a7a7a" stroke-width="1.6"/></svg>
<svg class="a" style="left:59.4px;top:373.15px" width="16.5" height="16.5"><circle cx="8.25" cy="8.25" r="7.9" fill="#fff" stroke="#d4d8de" stroke-width="0.7"/><text x="9.4" y="11.4" font-size="8.2" text-anchor="middle" fill="#2f86d4" font-family="Liberation Sans">3吉</text></svg>
<div class="a " style="left:79.90px;top:368px;font-size:7.0px;line-height:20px;color:#383838;font-weight:normal;">吉村 31</div>
<div class="a " style="left:80.00px;top:376px;font-size:6.3px;line-height:20px;color:#7c7c7c;font-weight:normal;">31@ontimedemo.com</div>
<svg class="a" style="left:59.4px;top:395.0px" width="16.5" height="16.5"><defs><clipPath id="C8"><circle cx="8.25" cy="8.25" r="8.25"/></clipPath></defs><g clip-path="url(#C8)"><rect width="17" height="17" fill="#5a4038"/><path d="M0 0h12L0 7z" fill="#80b8ec"/><path d="M0 2h6l-6 3z" fill="#b8dcf4"/><path d="M0 7L12 0h5v3L0 10z" fill="#2a1e1a"/><path d="M0 10l17-7v4L0 13z" fill="#8a7060"/><path d="M2 10.5h2v2H2zM7 8.5h2v2.5H7zM12 6.5h2v3h-2z" fill="#d8c8b0" opacity="0.8"/><path d="M0 13l17-4V17H0z" fill="#a05048"/><path d="M0 14.5l17-2.5V17H0z" fill="#e08070"/></g></svg>
<div class="a " style="left:79.90px;top:390px;font-size:7.0px;line-height:20px;color:#383838;font-weight:normal;">京都 六郎</div>
<div class="a " style="left:80.00px;top:398px;font-size:6.3px;line-height:20px;color:#7c7c7c;font-weight:normal;">kyoto@ontimedemo.com</div>
<svg class="a" style="left:212.7px;top:398.5px" width="7" height="7"><path d="M0.9 0.9l4.4 4.4M5.3 0.9l-4.4 4.4" stroke="#7a7a7a" stroke-width="1.6"/></svg>
<svg class="a" style="left:283.7px;top:398.5px" width="7" height="7"><path d="M0.9 0.9l4.4 4.4M5.3 0.9l-4.4 4.4" stroke="#7a7a7a" stroke-width="1.6"/></svg>
<svg class="a" style="left:354.7px;top:398.5px" width="7" height="7"><path d="M0.9 0.9l4.4 4.4M5.3 0.9l-4.4 4.4" stroke="#7a7a7a" stroke-width="1.6"/></svg>
<div class="a" style="left:536px;top:28px;width:162px;height:386px;background:#fff;"></div>
<div class="a" style="left:536px;top:28px;width:162px;height:21px;background:#f3f3f3;"></div>
<div class="a" style="left:43px;top:28px;width:655px;height:1px;background:#fafafa;"></div>
<svg class="a" style="left:687px;top:35.8px" width="8" height="7.2"><path d="M0.6 0.5l6.8 6.2M7.4 0.5l-6.8 6.2" stroke="#606060" stroke-width="1.5"/></svg>
<div class="a " style="left:541.00px;top:48px;font-size:6.6px;line-height:20px;color:#383838;font-weight:normal;">表示</div>
<svg class="a" style="left:569px;top:53.8px" width="7" height="7"><circle cx="3.3" cy="3.3" r="2.8" fill="#fff" stroke="#777" stroke-width="0.7"/><circle cx="3.3" cy="3.3" r="1.5" fill="#333"/></svg>
<div class="a " style="left:578.00px;top:48px;font-size:6.6px;line-height:20px;color:#383838;font-weight:normal;">全て</div>
<svg class="a" style="left:596.6px;top:53.8px" width="7" height="7"><circle cx="3.3" cy="3.3" r="2.8" fill="#fff" stroke="#777" stroke-width="0.7"/></svg>
<div class="a " style="left:605.00px;top:48px;font-size:6.6px;line-height:20px;color:#383838;font-weight:normal;">コメントのみ</div>
<div class="a" style="left:590.7px;top:62px;width:102.7px;height:23.5px;background:#e3ebfb;border-radius:6px"></div>
<div class="a " style="left:596.50px;top:60px;font-size:5.8px;line-height:20px;color:#b0b0b0;font-weight:normal;">主催者へ</div>
<div class="a " style="left:596.20px;top:66px;font-size:6.5px;line-height:20px;color:#3c3c3c;font-weight:normal;">本当にありがとうございます。</div>
<div class="a " style="left:675.00px;top:81px;font-size:5.8px;line-height:20px;color:#747474;font-weight:normal;">11:33</div>
<div class="a" style="left:601.6px;top:94.2px;width:91.9px;height:18.4px;background:#e3ebfb;border-radius:6px"></div>
<div class="a " style="left:607.00px;top:94px;font-size:6.5px;line-height:20px;color:#3c3c3c;font-weight:normal;">回答: 2020年5月25日 11:00</div>
<div class="a" style="left:541px;top:122px;width:43.3px;height:1px;background:#4b97d5;"></div>
<div class="a" style="left:650px;top:122px;width:43.3px;height:1px;background:#4b97d5;"></div>
<div class="a " style="left:590.30px;top:114px;font-size:6.5px;line-height:20px;color:#3286cc;font-weight:normal;">2020年5月6日 (水)</div>
<div class="a " style="left:544.60px;top:132px;font-size:5.8px;line-height:20px;color:#747474;font-weight:normal;">伊藤 02, 21:05</div>
<div class="a" style="left:541px;top:146px;width:81.8px;height:18.8px;background:#f2f2f2;border-radius:6px"></div>
<div class="a " style="left:546.50px;top:146px;font-size:6.5px;line-height:20px;color:#3c3c3c;font-weight:normal;">この日しかだめ。</div>
<div class="a " style="left:544.60px;top:160px;font-size:5.8px;line-height:20px;color:#747474;font-weight:normal;">21:05</div>
<div class="a" style="left:541px;top:173.7px;width:121.5px;height:27.7px;background:#f2f2f2;border-radius:6px"></div>
<div class="a " style="left:546.50px;top:174px;font-size:6.5px;line-height:20px;color:#3c3c3c;font-weight:normal;">回答: 2020年5月25日 11:00,</div>
<div class="a " style="left:546.50px;top:183px;font-size:6.5px;line-height:20px;color:#3c3c3c;font-weight:normal;">&nbsp;2020年5月27日 10:00</div>
<div class="a " style="left:544.60px;top:204px;font-size:5.8px;line-height:20px;color:#747474;font-weight:normal;">岡野 05, 21:06</div>
<div class="a" style="left:541px;top:218px;width:91.4px;height:18.6px;background:#f2f2f2;border-radius:6px"></div>
<div class="a " style="left:546.50px;top:218px;font-size:6.5px;line-height:20px;color:#3c3c3c;font-weight:normal;">回答: 2020年5月27日 10:00</div>
<div class="a " style="left:544.60px;top:240px;font-size:5.8px;line-height:20px;color:#747474;font-weight:normal;">加藤 06, 21:08</div>
<div class="a" style="left:541px;top:252.9px;width:102.3px;height:18.5px;background:#f2f2f2;border-radius:6px"></div>
<div class="a " style="left:546.50px;top:253px;font-size:6.5px;line-height:20px;color:#3c3c3c;font-weight:normal;">お誘いありがとうございます。</div>
<div class="a " style="left:544.60px;top:268px;font-size:5.8px;line-height:20px;color:#747474;font-weight:normal;">21:08</div>
<div class="a" style="left:541px;top:280.6px;width:121.5px;height:27.8px;background:#f2f2f2;border-radius:6px"></div>
<div class="a " style="left:546.50px;top:281px;font-size:6.5px;line-height:20px;color:#3c3c3c;font-weight:normal;">回答: 2020年5月25日 10:00,</div>
<div class="a " style="left:546.50px;top:290px;font-size:6.5px;line-height:20px;color:#3c3c3c;font-weight:normal;">&nbsp;2020年5月25日 11:00</div>
<div class="a " style="left:646.50px;top:311px;font-size:5.8px;line-height:20px;color:#747474;font-weight:normal;">神戸 四郎, 21:49</div>
<div class="a" style="left:610.3px;top:324.5px;width:83px;height:18.7px;background:#e3ebfb;border-radius:6px"></div>
<div class="a " style="left:615.80px;top:325px;font-size:6.5px;line-height:20px;color:#3c3c3c;font-weight:normal;">みんないけそうですね。</div>
<div class="a " style="left:544.80px;top:346px;font-size:5.8px;line-height:20px;color:#747474;font-weight:normal;">京都 六郎, 21:50</div>
<div class="a" style="left:541px;top:360px;width:80px;height:12px;background:#f2f2f2;border-radius:6px"></div>
<div class="a" style="left:537px;top:49px;width:160px;height:62px;pointer-events:none"></div>
<div class="a" style="left:537px;top:60px;width:160px;height:14px;background:linear-gradient(#fff 30%,rgba(255,255,255,0))"></div>
<div class="a" style="left:537px;top:359px;width:160px;height:12px;background:linear-gradient(rgba(255,255,255,0.1),#fff 45%)"></div>
<div class="a" style="left:541px;top:371px;width:153px;height:28px;border:1px solid #e0e5ec"></div>
<div class="a " style="left:544.50px;top:370px;font-size:6.6px;line-height:20px;color:#a8a8a8;font-weight:normal;">コメント入力</div>
<svg class="a" style="left:541px;top:403.6px" width="7" height="7"><rect x="0.4" y="0.4" width="5.8" height="5.8" fill="#fff" stroke="#8a8a8a" stroke-width="0.7"/></svg>
<div class="a " style="left:549.50px;top:398px;font-size:6.6px;line-height:20px;color:#383838;font-weight:normal;">主催者へ</div>
<div class="a" style="left:649.3px;top:401px;width:44.6px;height:12px;border:1px solid #dcdcdc;border-radius:2px;background:#fff"></div>
<div class="a " style="left:665.50px;top:398px;font-size:6.6px;line-height:20px;color:#c8c8c8;font-weight:normal;">送信</div>
<div class="a" style="left:698px;top:28px;width:1px;height:386px;background:#c4c4c4;"></div>
<div class="a" style="left:699px;top:0px;width:1px;height:416px;background:#8e8e8e;"></div>
<div class="a" style="left:0px;top:414px;width:700px;height:1px;background:#8a8a8a;"></div>
<div class="a" style="left:0px;top:415px;width:700px;height:1px;background:#6a6a6a;"></div>
</body></html>
